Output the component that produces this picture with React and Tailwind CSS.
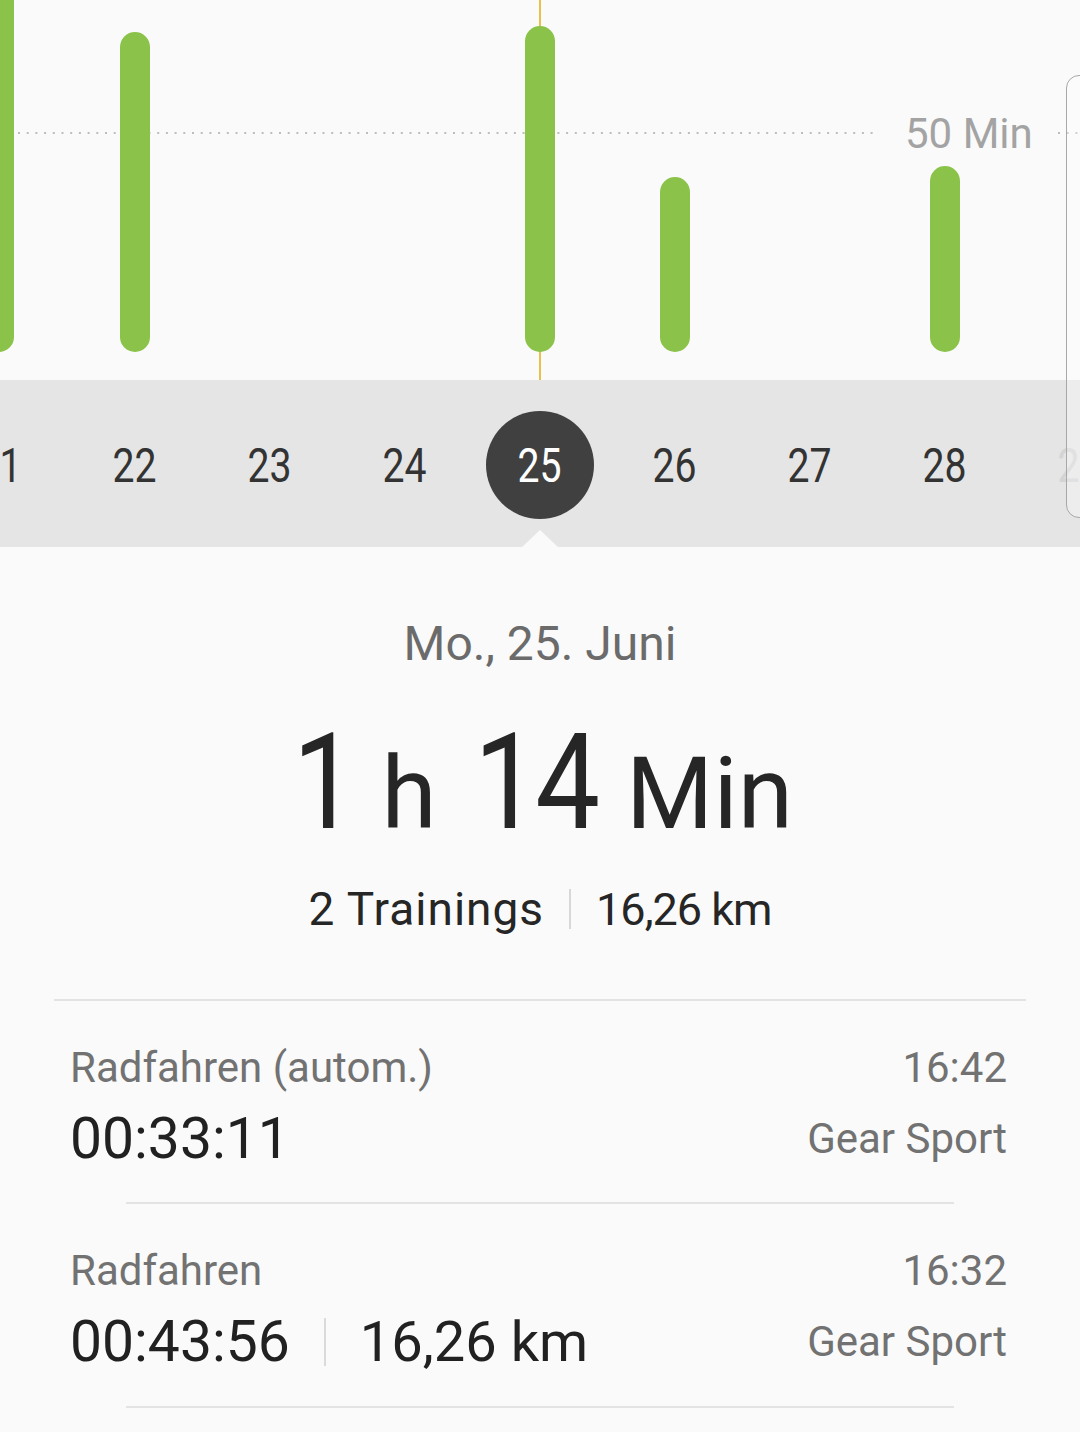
import React from "react";

const days = [
  { d: "21", cls: "text-[#333333]" },
  { d: "22", cls: "text-[#333333]" },
  { d: "23", cls: "text-[#333333]" },
  { d: "24", cls: "text-[#333333]" },
  { d: "25", sel: true },
  { d: "26", cls: "text-[#333333]" },
  { d: "27", cls: "text-[#333333]" },
  { d: "28", cls: "text-[#333333]" },
  { d: "29", cls: "text-[#d4d4d4]" },
];

const bars = [
  { x: -16, y: -20 },
  { x: 120, y: 32 },
  { x: 525, y: 26 },
  { x: 660, y: 177 },
  { x: 930, y: 166 },
];

function Chart() {
  return (
    <div className="relative h-[380px] bg-[#fafafa]">
      <svg width="1080" height="380" className="block">
        <line x1="18" y1="133" x2="878" y2="133" stroke="#bdbdbd" strokeWidth="2" strokeDasharray="2 6.7" />
        <line x1="1058" y1="133" x2="1080" y2="133" stroke="#bdbdbd" strokeWidth="2" strokeDasharray="2 6.7" />
        <rect x="539" y="0" width="2" height="380" fill="#e6c24a" />
        {bars.map((b, i) => (
          <rect key={i} x={b.x} y={b.y} width="30" height={352 - b.y} rx="15" fill="#8bc34a" />
        ))}
      </svg>
      <span className="absolute left-[905px] top-[113px] text-[42px] leading-none text-[#a3a3a3]">50 Min</span>
    </div>
  );
}

function DateStrip() {
  return (
    <div className="relative h-[167px] bg-[#e5e5e5] overflow-hidden">
      <div className="flex h-full items-center ml-[-67.5px] pt-[3px]">
        {days.map((day) => (
          <div key={day.d} className="w-[135px] shrink-0 flex items-center justify-center">
            {day.sel ? (
              <div className="w-[108px] h-[108px] rounded-full bg-[#404040] flex items-center justify-center">
                <span className="inline-block scale-x-[0.8] text-[49px] leading-none text-white">{day.d}</span>
              </div>
            ) : (
              <span className={"inline-block scale-x-[0.8] text-[49px] leading-none " + day.cls}>{day.d}</span>
            )}
          </div>
        ))}
      </div>
      <div className="absolute left-[522px] bottom-0 w-0 h-0 border-l-[18px] border-r-[18px] border-b-[17px] border-l-transparent border-r-transparent border-b-[#fafafa]" />
    </div>
  );
}

function Row({ title, time, value, km }) {
  return (
    <div className="pl-[70px] pr-[73px]">
      <div className="flex justify-between items-baseline">
        <span className="text-[42px] leading-none text-[#727272]">{title}</span>
        <span className="text-[42px] leading-none text-[#727272]">{time}</span>
      </div>
      <div className="flex justify-between items-center mt-[21px]">
        <div className="flex items-center">
          <span className="text-[57px] leading-none text-[#212121]">{value}</span>
          {km && (
            <>
              <span className="w-[2px] h-[48px] bg-[#dadada] mx-[34px]" />
              <span className="text-[56px] leading-none text-[#212121]">{km}</span>
            </>
          )}
        </div>
        <span className="text-[42px] leading-none text-[#727272]">Gear Sport</span>
      </div>
    </div>
  );
}

export default function App() {
  return (
    <div className="relative w-[1080px] h-[1432px] overflow-hidden bg-[#fafafa] font-['Roboto',sans-serif]">
      <Chart />
      <DateStrip />
      <div className="flex flex-col items-center">
        <div className="mt-[73px] text-[48px] leading-none text-[#6b6b6b]">Mo., 25. Juni</div>
        <div className="mt-[48px] flex items-baseline leading-none text-[#262626]">
          <span className="text-[134px] inline-block scale-x-[0.85]">1</span>
          <span className="text-[100px] ml-[19px]">h</span>
          <span className="text-[134px] ml-[28px] inline-block scale-x-[0.86] tracking-[-4px]">14</span>
          <span className="text-[100px] ml-[19px]">Min</span>
        </div>
        <div className="mt-[36px] flex items-center leading-none text-[#262626]">
          <span className="text-[46px] tracking-[1px]">2 Trainings</span>
          <span className="w-[2px] h-[40px] bg-[#d8d8d8] mx-[25px]" />
          <span className="text-[45px] inline-block tracking-[-1px]">16,26 km</span>
        </div>
      </div>
      <div className="mt-[67px] mx-[54px] h-[2px] bg-[#e3e3e3]" />
      <div className="pt-[46px] pb-[35px]">
        <Row title="Radfahren (autom.)" time="16:42" value="00:33:11" />
      </div>
      <div className="mx-[126px] h-[2px] bg-[#e3e3e3]" />
      <div className="pt-[46px] pb-[36px]">
        <Row title="Radfahren" time="16:32" value="00:43:56" km="16,26 km" />
      </div>
      <div className="mx-[126px] h-[2px] bg-[#e3e3e3]" />
      <div className="absolute left-[1066px] top-[75px] w-[40px] h-[443px] rounded-[13px] border-[1.5px] border-[#a8a8a8] bg-white/30" />
    </div>
  );
}
